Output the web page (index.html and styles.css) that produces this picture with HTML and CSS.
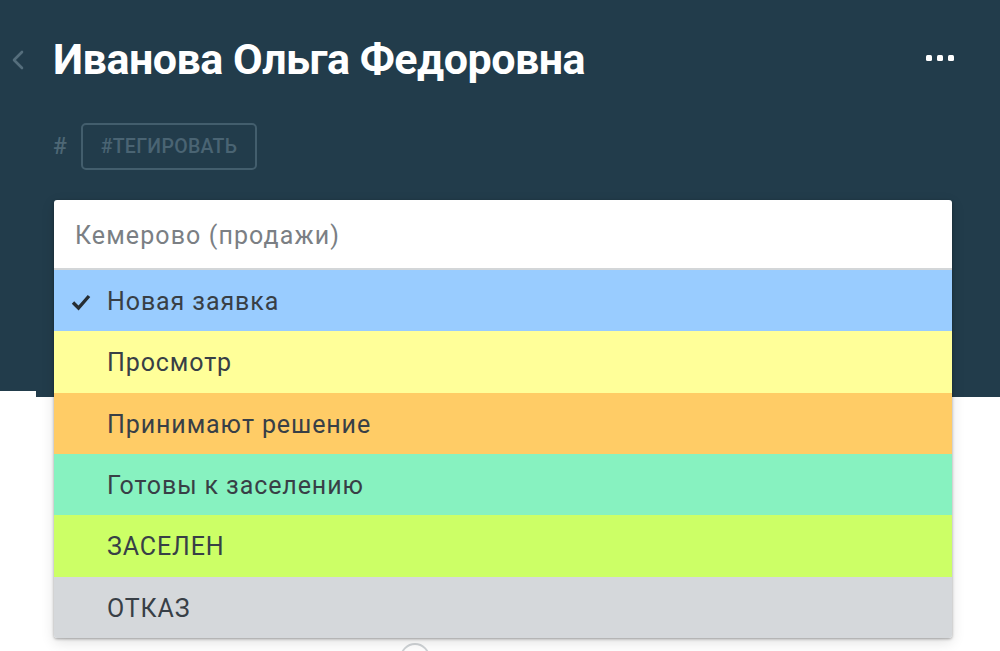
FILE: index.html
```html
<!DOCTYPE html>
<html lang="ru">
<head>
<meta charset="utf-8">
<title>Иванова Ольга Федоровна</title>
<link rel="stylesheet" href="styles.css">
</head>
<body>
<div class="page">
  <header class="card-head">
    <div class="title-row">
      <a class="back" href="#" aria-label="Назад">
        <svg width="16" height="22" viewBox="0 0 16 22"><path d="M12 3 L4 11 L12 19" fill="none" stroke="#556e7c" stroke-width="2.6" stroke-linecap="round" stroke-linejoin="round"/></svg>
      </a>
      <h1 class="name">Иванова Ольга Федоровна</h1>
      <button class="more" aria-label="Ещё"><span></span><span></span><span></span></button>
    </div>
    <div class="tags-row">
      <span class="hash">#</span>
      <button class="tag-btn">#ТЕГИРОВАТЬ</button>
    </div>
  </header>
  <div class="head-tail"></div>
  <main class="card-body">
    <span class="radio"></span>
  </main>

  <div class="status-menu">
    <div class="pipeline">Кемерово (продажи)</div>
    <ul class="statuses">
      <li class="status s-new selected">
        <svg class="check" width="20" height="18" viewBox="0 0 20 18"><path d="M2 9.5 L7.5 15 L18 3" fill="none" stroke="#262d33" stroke-width="3.4" stroke-linejoin="miter"/></svg>
        Новая заявка
      </li>
      <li class="status s-view">Просмотр</li>
      <li class="status s-decide">Принимают решение</li>
      <li class="status s-ready">Готовы к заселению</li>
      <li class="status s-settled">ЗАСЕЛЕН</li>
      <li class="status s-refused">ОТКАЗ</li>
    </ul>
  </div>
</div>
</body>
</html>
```

FILE: styles.css
```css
html, body {
  margin: 0;
  padding: 0;
  background: #ffffff;
  font-family: "Noto Sans", "Open Sans", sans-serif;
}

.page {
  position: relative;
  width: 1000px;
  height: 651px;
  overflow: hidden;
}

/* dark card header */
.card-head {
  background: #223c4b;
  height: 391px;
  box-sizing: border-box;
  padding: 26px 46px 0 10px;
}

.head-tail {
  height: 6px;
  margin-left: 36px;
  background: #223c4b;
}

.title-row {
  display: flex;
  align-items: center;
  height: 66px;
}

.back {
  display: flex;
  width: 22px;
  margin-right: 21px;
  padding-top: 2px;
}

.name {
  margin: 0;
  flex: 1;
  color: #ffffff;
  font-family: "Roboto", "Noto Sans", sans-serif;
  font-weight: 700;
  font-size: 43px;
  letter-spacing: -0.5px;
  line-height: 66px;
}

.more {
  display: flex;
  gap: 5px;
  padding: 0;
  border: 0;
  background: none;
  margin-top: -2px;
}

.more span {
  width: 6px;
  height: 6px;
  border-radius: 1.5px;
  background: #ffffff;
}

.tags-row {
  display: flex;
  align-items: center;
  margin-top: 31px;
  padding-left: 43px;
}

.hash {
  color: #4d6775;
  font-family: "Roboto", sans-serif;
  font-weight: 500;
  font-size: 23px;
  width: 28px;
}

.tag-btn {
  height: 47px;
  width: 176px;
  box-sizing: border-box;
  border: 2px solid #435e6d;
  border-radius: 5px;
  background: transparent;
  color: #4a6473;
  font-family: "Roboto", sans-serif;
  font-weight: 500;
  font-size: 19.5px;
  padding: 0;
  letter-spacing: 0.3px;
}

/* white card body */
.card-body {
  position: relative;
  height: 254px;
}

.radio {
  position: absolute;
  left: 400px;
  top: 246px;
  width: 26px;
  height: 26px;
  border: 2px solid #cfd3d6;
  border-radius: 50%;
}

/* status dropdown overlay */
.status-menu {
  position: absolute;
  left: 54px;
  top: 200px;
  width: 898px;
  border-radius: 3px;
  overflow: hidden;
  box-shadow: 0 1px 3px rgba(0, 0, 0, 0.35), 0 4px 14px rgba(0, 0, 0, 0.12);
  font-family: "Roboto", "Noto Sans", sans-serif;
}

.pipeline {
  height: 70px;
  box-sizing: border-box;
  padding-left: 21px;
  padding-top: 2px;
  display: flex;
  align-items: center;
  background: #ffffff;
  color: #7b7f84;
  font-size: 25px;
  letter-spacing: 1.1px;
  border-bottom: 2px solid #d3d6d8;
}

.statuses {
  list-style: none;
  margin: 0;
  padding: 0;
}

.status {
  height: 61.33px;
  display: flex;
  align-items: center;
  box-sizing: border-box;
  padding-left: 53px;
  padding-top: 2px;
  color: #383f46;
  font-size: 25px;
  letter-spacing: 0.9px;
}

.status.selected {
  padding-left: 17px;
}

.check {
  margin-right: 16px;
}

.s-new { background: #99ccff; }
.s-view { background: #ffff99; }
.s-decide { background: #ffcc66; }
.s-ready { background: #87f2c0; }
.s-settled { background: #ccff66; }
.s-refused { background: #d5d8db; }
```
